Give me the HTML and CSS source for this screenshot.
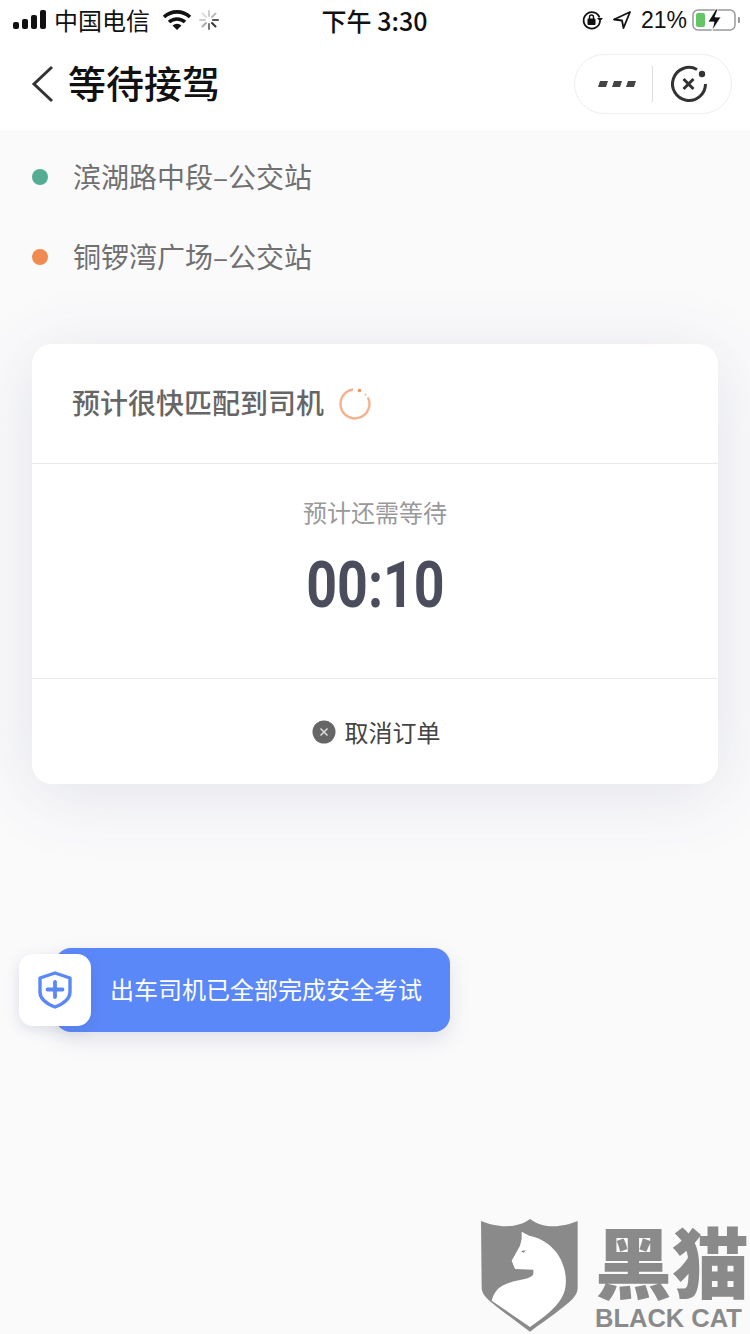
FILE: index.html
```html
<!DOCTYPE html>
<html lang="zh-CN">
<head>
  <meta charset="UTF-8" />
  <meta name="viewport" content="width=device-width, initial-scale=1.0"/>
  <title>等待接驾</title>
  <link rel="stylesheet" href="styles.css">
</head>
<body>
  <div class="page">
    <header class="top">
      <div class="status-bar">
        <div class="status-left">
          <svg class="signal" width="35" height="20" viewBox="0 0 35 20">
            <rect x="0" y="12" width="6" height="7" rx="2" fill="#111"/>
            <rect x="9" y="9" width="6" height="10" rx="2" fill="#111"/>
            <rect x="18" y="5" width="6" height="14" rx="2" fill="#111"/>
            <rect x="27" y="0" width="6" height="19" rx="2" fill="#111"/>
          </svg>
          <span class="carrier">中国电信</span>
          <svg class="wifi" width="32" height="22" viewBox="0 0 32 22">
            <path d="M3 8a19 19 0 0 1 26 0" fill="none" stroke="#111" stroke-width="3.6"/>
            <path d="M8 13a12 12 0 0 1 16 0" fill="none" stroke="#111" stroke-width="3.6"/>
            <path d="M11.500 16.500a7 7 0 0 1 9 0L16 21z" fill="#111"/>
          </svg>
          <svg class="spinner" width="22" height="22" viewBox="0 0 22 22" stroke-width="2" stroke-linecap="round">
            <path d="M11 2v5" stroke="#ccc"/>
            <path d="M17.500 4.500l-3.500 3.500" stroke="#bbb"/>
            <path d="M20 11h-5" stroke="#555"/>
            <path d="M17.500 17.500l-3.500-3.500" stroke="#333"/>
            <path d="M11 20v-5" stroke="#777"/>
            <path d="M4.500 17.500l3.500-3.500" stroke="#aaa"/>
            <path d="M2 11h5" stroke="#ccc"/>
            <path d="M4.500 4.500l3.500 3.500" stroke="#ddd"/>
          </svg>
        </div>
        <div class="status-time">下午 3:30</div>
        <div class="status-right">
          <svg width="22" height="22" viewBox="0 0 22 22">
            <path d="M18.500 8.500A8.200 8.200 0 1 0 19 12" fill="none" stroke="#111" stroke-width="1.800"/>
            <path d="M16 9h6l-3 3.500z" fill="#111"/>
            <rect x="6.500" y="9.500" width="8" height="6.500" rx="1" fill="#111"/>
            <path d="M8.500 10V8a2 2 0 0 1 4 0v2" fill="none" stroke="#111" stroke-width="1.400"/>
          </svg>
          <svg class="arrow" width="20" height="20" viewBox="0 0 20 20">
            <path d="M18 2L2 9.500l8 1 1.500 7.500z" fill="none" stroke="#111" stroke-width="1.800" stroke-linejoin="round"/>
          </svg>
          <span class="battery-text">21%</span>
          <svg width="48" height="24" viewBox="0 0 48 24">
            <rect x="1" y="2" width="42" height="20" rx="5" fill="none" stroke="#999" stroke-width="1.500"/>
            <rect x="4" y="5" width="9" height="14" rx="2" fill="#65c466"/>
            <path d="M46 9a3 3 0 0 1 0 6z" fill="#999"/>
            <path d="M24 1l-8 13h6l-2 9 9-14h-6l3-8z" fill="#111" stroke="#fff" stroke-width="0.800"/>
          </svg>
        </div>
      </div>
      <nav class="nav">
        <svg class="back" width="26" height="40" viewBox="0 0 26 40">
          <path d="M22 3L4 20l18 17" fill="none" stroke="#333" stroke-width="3"/>
        </svg>
        <h1 class="nav-title">等待接驾</h1>
        <div class="capsule">
          <svg width="38" height="6" viewBox="0 0 38 6">
            <path d="M2 0h8l-2 6H0zM16 0h8l-2 6H14zM30 0h8l-2 6H28z" fill="#444"/>
          </svg>
          <span class="capsule-line"></span>
          <svg width="40" height="40" viewBox="0 0 40 40">
            <path d="M28 5.500A16.500 16.500 0 1 0 36.500 20" fill="none" stroke="#333" stroke-width="3"/>
            <circle cx="33" cy="10" r="3.200" fill="#333"/>
            <path d="M14.500 15l10 10M24.500 15l-10 10" stroke="#333" stroke-width="3"/>
          </svg>
        </div>
      </nav>
    </header>

    <main class="content">
      <div class="route">
        <div class="route-row"><i class="dot dot-start"></i>滨湖路中段–公交站</div>
        <div class="route-row"><i class="dot dot-end"></i>铜锣湾广场–公交站</div>
      </div>

      <section class="card">
        <div class="card-head">
          <span class="card-title">预计很快匹配到司机</span>
          <svg width="34" height="34" viewBox="0 0 34 34">
            <path d="M15 2.500A14.500 14.500 0 1 0 30 10.500" fill="none" stroke="#f5b28f" stroke-width="2.400"/>
            <circle cx="21.500" cy="3.500" r="1.800" fill="#f0935f"/>
            <circle cx="27.500" cy="7.500" r="1" fill="#f5b28f"/>
          </svg>
        </div>
        <div class="card-body">
          <p class="wait-label">预计还需等待</p>
          <p class="wait-time"><span class="wait-digits">00:10</span></p>
        </div>
        <div class="card-foot">
          <svg width="24" height="24" viewBox="0 0 24 24">
            <circle cx="12" cy="12" r="11.500" fill="#666"/>
            <path d="M8.500 8.500l7 7M15.500 8.500l-7 7" stroke="#ddd" stroke-width="1.500"/>
          </svg>
          <span>取消订单</span>
        </div>
      </section>

      <div class="safety">
        <div class="safety-icon">
          <svg width="34" height="38" viewBox="0 0 34 38">
            <path d="M17 2l15 5v14c0 7-7 12-15 15C9 33 2 28 2 21V7z" fill="none" stroke="#5b88f9" stroke-width="3.400" stroke-linejoin="round"/>
            <path d="M17 11v15M9.500 18.500h15" stroke="#5b88f9" stroke-width="3.800" stroke-linecap="round"/>
          </svg>
        </div>
        <div class="safety-text">出车司机已全部完成安全考试</div>
      </div>
    </main>

    <div class="watermark">
      <svg class="watermark-logo" width="100" height="116" viewBox="0 0 300 348">
        <path d="M0 6C40 22 100 34 147 0c47 34 103 22 143 6v199c0 30-20 45-143 133C30 250 2 235 2 205z" fill="#8a8a8a"/>
        <path d="M122 38l23 12c52 10 92 48 105 100 8 34 6 62-8 86-18 32-55 60-95 88L32 245c6-20 14-32 25-40 18-12 40-18 60-22 20-4 36-8 40-18v-13l-55-2-10-25 25-45 5-20z" fill="#fff"/>
        <path d="M120 96l14-2-6 8z" fill="#8a8a8a"/>
      </svg>
      <div class="watermark-text">
        <div class="watermark-cn">黑猫</div>
        <div class="watermark-en">BLACK CAT</div>
      </div>
    </div>
  </div>
</body>
</html>
```

FILE: styles.css
```css
* {
  box-sizing: border-box;
}
body {
  margin: 0;
  padding: 0;
  background: #fafafb;
  font-family: "Noto Sans CJK SC", "Liberation Sans", sans-serif;
  color: #333;
}
.page {
  position: relative;
  width: 750px;
  height: 1334px;
  overflow: hidden;
  background: #fafafb;
}
.top {
  position: relative;
  z-index: 1;
  background: #fff;
  height: 130px;
}
.status-bar {
  height: 40px;
  display: grid;
  grid-template-columns: 1fr auto 1fr;
  align-items: center;
  padding: 0 10px 0 13px;
  color: #111;
}
.status-left, .status-right {
  display: flex;
  align-items: center;
}
.status-right {
  justify-content: flex-end;
  gap: 9px;
}
.carrier {
  font-size: 24px;
  margin-left: 6px;
  line-height: 40px;
}
.wifi {
  margin-left: 11px;
}
.spinner {
  margin-left: 5px;
}
.status-time {
  font-size: 25px;
  line-height: 38px;
  font-weight: 500;
  margin-left: -4px;
}
.battery-text {
  font-family: "Liberation Sans", sans-serif;
  font-size: 23px;
  margin-right: -4px;
}
.nav {
  height: 90px;
  display: flex;
  align-items: center;
  padding: 0 18px 2px 30px;
}
.nav-title {
  margin: 0 0 4px 12px;
  font-size: 38px;
  font-weight: 500;
  color: #111;
  line-height: 50px;
}
.capsule {
  margin-left: auto;
  width: 158px;
  height: 60px;
  border: 1px solid #eee;
  border-radius: 30px;
  display: flex;
  align-items: center;
  padding-left: 23px;
}
.capsule-line {
  width: 1px;
  height: 36px;
  background: #ddd;
  margin: 0 16px 0 16px;
}
.content {
  padding: 0 32px;
}
.route {
  padding-top: 6px;
}
.route-row {
  height: 80px;
  display: flex;
  align-items: center;
  font-size: 28px;
  color: #707070;
}
.dot {
  width: 16px;
  height: 16px;
  border-radius: 50%;
  margin: 2px 25px 0 0;
}
.dot-start {
  background: #54ad92;
}
.dot-end {
  background: #ef8a50;
}
.card {
  margin-top: 48px;
  width: 686px;
  height: 440px;
  background: #fff;
  border-radius: 20px;
  box-shadow: 0 10px 70px rgba(70, 80, 120, 0.13);
}
.card-head {
  height: 120px;
  padding-left: 40px;
  display: flex;
  align-items: center;
  gap: 14px;
  font-size: 28px;
  font-weight: 500;
  color: #666;
  border-bottom: 1px solid #e9e9e9;
}
.card-title {
  margin-bottom: 4px;
}
.card-body {
  height: 215px;
  text-align: center;
  border-bottom: 1px solid #e9e9e9;
}
.wait-label {
  margin: 0;
  padding-top: 30px;
  font-size: 24px;
  line-height: 36px;
  color: #999;
}
.wait-time {
  margin: 0;
  padding-top: 20px;
  font-family: "Roboto", sans-serif;
  font-size: 64px;
  font-weight: 700;
  line-height: 72px;
  color: #4c4d5c;
}
.wait-digits {
  display: inline-block;
  transform: scaleX(0.84);
}
.card-foot {
  height: 105px;
  display: flex;
  align-items: center;
  justify-content: center;
  gap: 9px;
  padding-left: 2px;
  font-size: 24px;
  color: #444;
}
.safety {
  position: relative;
  margin: 164px 0 0 23px;
  width: 395px;
  height: 84px;
  background: #5b88f9;
  border-radius: 16px;
  box-shadow: 0 8px 20px rgba(70, 80, 120, 0.14);
  display: flex;
  align-items: center;
  padding-left: 55px;
}
.safety-icon {
  position: absolute;
  left: -36px;
  top: 6px;
  width: 72px;
  height: 72px;
  background: #fff;
  border-radius: 14px;
  box-shadow: 0 4px 14px rgba(70, 80, 120, 0.16);
  display: flex;
  align-items: center;
  justify-content: center;
}
.safety-text {
  font-size: 24px;
  color: #fff;
  margin-bottom: 4px;
}
.watermark {
  position: absolute;
  left: 481px;
  top: 1219px;
  display: flex;
  color: #8a8a8a;
}
.watermark-text {
  margin-left: 14px;
}
.watermark-cn {
  font-size: 77px;
  font-weight: 900;
  line-height: 82px;
  height: 82px;
  white-space: nowrap;
}
.watermark-en {
  font-family: "Liberation Sans", sans-serif;
  font-size: 25.500px;
  font-weight: 700;
  line-height: 28px;
  margin-top: 3px;
  white-space: nowrap;
}
```
